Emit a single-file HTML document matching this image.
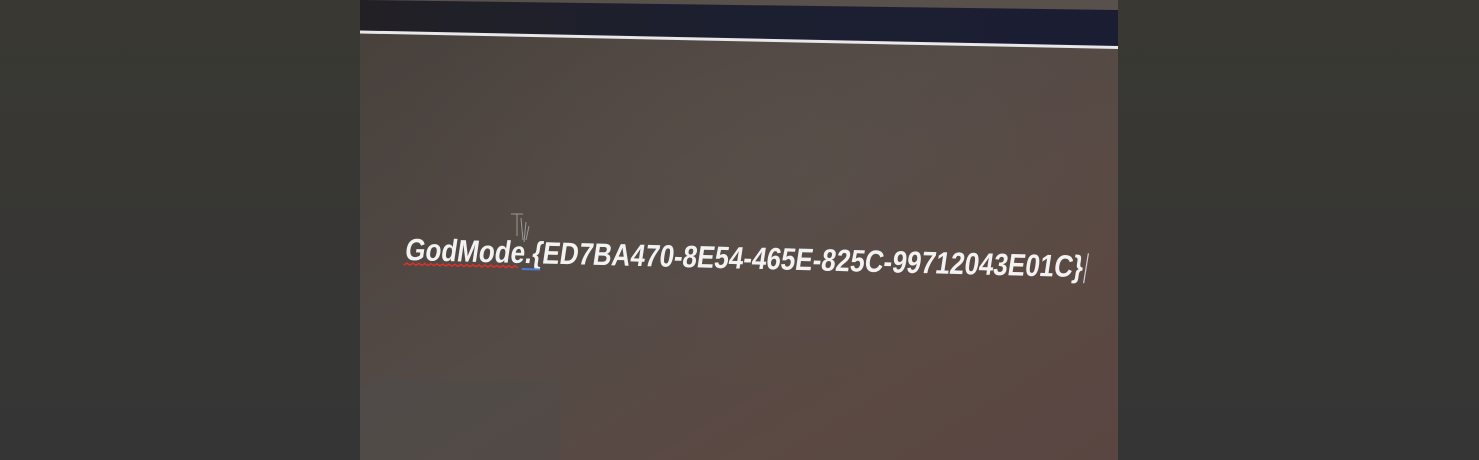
<!DOCTYPE html>
<html><head><meta charset="utf-8"><style>
html,body{margin:0;padding:0;width:1479px;height:460px;overflow:hidden;background:#363634;}
</style></head><body>
<svg width="1479" height="460" xmlns="http://www.w3.org/2000/svg" style="display:block">
<defs>
<linearGradient id="side" x1="0" y1="0" x2="0" y2="1">
<stop offset="0" stop-color="#393833"/><stop offset="1" stop-color="#353535"/>
</linearGradient>
<linearGradient id="scr" x1="0" y1="0" x2="1" y2="1">
<stop offset="0" stop-color="#47403b"/>
<stop offset="0.45" stop-color="#534a46"/>
<stop offset="0.75" stop-color="#5b4943"/>
<stop offset="1" stop-color="#594541"/>
</linearGradient>
<radialGradient id="glow" cx="0.55" cy="0.35" r="0.5">
<stop offset="0" stop-color="#5e534c" stop-opacity="0.5"/>
<stop offset="1" stop-color="#5e534c" stop-opacity="0"/>
</radialGradient>
<linearGradient id="bar" x1="0" y1="0" x2="1" y2="0">
<stop offset="0" stop-color="#222025"/><stop offset="0.5" stop-color="#1c1f30"/><stop offset="1" stop-color="#1b1e33"/>
</linearGradient>
</defs>
<rect width="1479" height="460" fill="url(#side)"/>
<rect x="360" y="0" width="758" height="460" fill="url(#scr)"/>
<rect x="360" y="0" width="758" height="460" fill="url(#glow)"/>
<rect x="360" y="380" width="200" height="80" fill="#4d4b4a" opacity="0.5"/>
<polygon points="360,0 1118,0 1118,11 360,0" fill="#57504b"/>
<polygon points="360,0 1118,10 1118,47 360,31" fill="url(#bar)"/>
<polygon points="360,30.5 1118,46 1118,49 360,33.5" fill="#e8e8ea"/>
<g transform="translate(404,260) rotate(1.45)">
<g transform="skewX(-7)">
<text x="0" y="0" font-family="'Liberation Sans',sans-serif" font-weight="bold" font-size="31" fill="#f2f2f2" textLength="678" lengthAdjust="spacingAndGlyphs">GodMode.{ED7BA470-8E54-465E-825C-99712043E01C}</text>
</g>
<path d="M0,5 l3,-2 l3,2 l3,-2 l3,2 l3,-2 l3,2 l3,-2 l3,2 l3,-2 l3,2 l3,-2 l3,2 l3,-2 l3,2 l3,-2 l3,2 l3,-2 l3,2 l3,-2 l3,2 l3,-2 l3,2 l3,-2 l3,2 l3,-2 l3,2 l3,-2 l3,2 l3,-2 l3,2 l3,-2 l3,2 l3,-2 l3,2 l3,-2 l3,2 l3,-2 l3,2" fill="none" stroke="#e0302a" stroke-width="1.5"/>
<rect x="118" y="5" width="18" height="2" fill="#4a7cd8"/>
<line x1="684" y1="-24" x2="680" y2="6" stroke="#cfcfd8" stroke-width="1.2"/>
</g>
<g stroke="#bbb" stroke-width="1" fill="none" opacity="0.7">
<path d="M511,214 h12 M517,214 v22 M521,218 l2,22 M526,222 l-2,20 M529,226 l-3,14"/>
</g>
</svg>
</body></html>
